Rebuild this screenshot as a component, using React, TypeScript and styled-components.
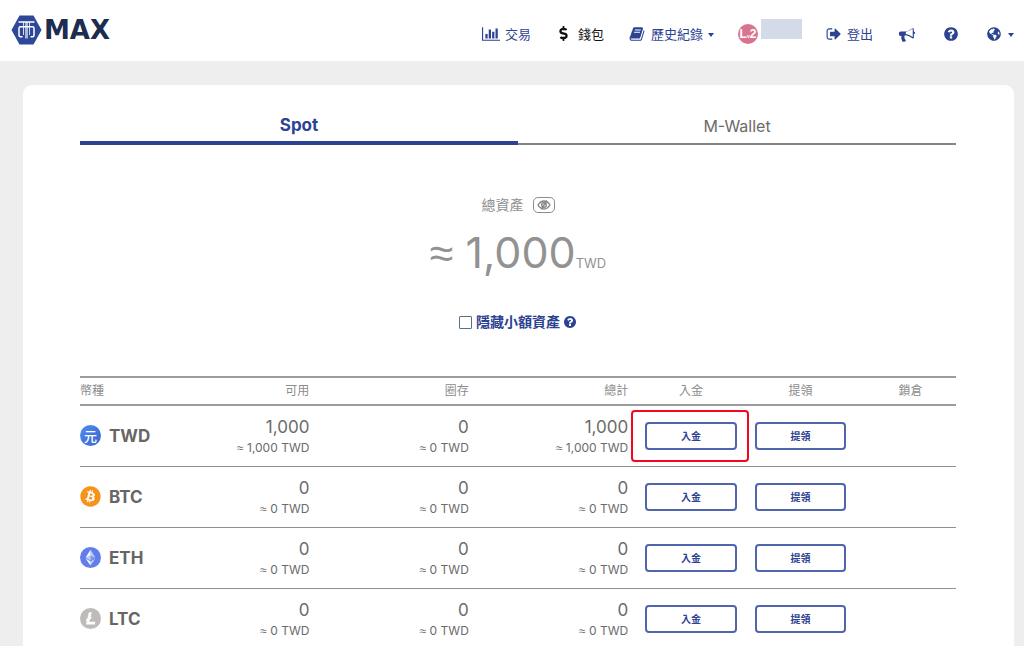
import React from "react";
import styled, { createGlobalStyle, css } from "styled-components";
import { FaBitcoin, FaDollarSign, FaGlobeAmericas } from "react-icons/fa";

const blue = "#2c4292";

const GlobalStyle = createGlobalStyle`
  *, *::before, *::after { box-sizing: border-box; }
  body {
    margin: 0;
    background: #eee;
    color: #6b6b6b;
    font-family: Inter, "Noto Sans CJK TC", sans-serif;
    font-size: 13px;
  }
  button, input { font: inherit; }
`;

const Header = styled.header`
  display: flex;
  justify-content: space-between;
  height: 61px;
  padding: 0 10px 0 11px;
  background: #fff;
`;

const Brand = styled.a`
  display: flex;
  align-items: center;
  gap: 2px;
  padding-bottom: 2px;
  color: #1c2d50;
  font-family: "DejaVu Sans", sans-serif;
  font-size: 26px;
  font-weight: 700;
  line-height: 30px;
  text-decoration: none;
`;

const Nav = styled.nav`
  display: flex;
  align-items: center;
  gap: 24px;
  padding-top: 6px;
`;

const NavLink = styled.a<{ $active?: boolean }>`
  display: flex;
  align-items: center;
  gap: 5px;
  color: ${(p) => (p.$active ? "#111" : blue)};
  line-height: 20px;
  text-decoration: none;
  white-space: nowrap;
`;

const IconBox = styled.span<{ $width?: number }>`
  display: flex;
  align-items: center;
  justify-content: center;
  width: ${(p) => p.$width ?? 18}px;
`;

const Caret = styled.span`
  border: 3px solid transparent;
  border-top: 4px solid currentColor;
  border-bottom: 0;
  margin-top: 3px;
`;

const User = styled.div`
  display: flex;
  align-items: center;
  gap: 3px;
`;

const Level = styled.span`
  width: 20px;
  height: 20px;
  border-radius: 50%;
  background: #d9748f;
  color: #fff;
  font-family: "Liberation Sans", sans-serif;
  font-size: 12px;
  font-weight: 700;
  line-height: 20px;
  text-align: center;
  white-space: nowrap;
  small { font-size: 5px; line-height: 1; }
`;

const UserName = styled.span`
  width: 41px;
  height: 20px;
  margin-bottom: 10px;
  background: #d5dae9;
`;

const Card = styled.main`
  margin: 24px 10px 0 23px;
  padding: 0 58px 0 57px;
  border-radius: 9px 9px 0 0;
  background: #fff;
`;

const Tabs = styled.div`
  display: flex;
  height: 60px;
`;

const Tab = styled.button<{ $active?: boolean }>`
  flex: 1;
  padding: 24px 0 0;
  border: 0;
  background: none;
  color: #6b6b6b;
  font-size: 16px;
  line-height: 20px;
  border-bottom: 2px solid #858585;
  ${(p) =>
    p.$active &&
    css`
      color: ${blue};
      font-size: 17px;
      font-weight: 700;
      border-bottom: 4px solid ${blue};
    `}
`;

const Summary = styled.section`
  display: flex;
  flex-direction: column;
  align-items: center;
  padding: 48px 0 42px;
  color: #929292;
`;

const SummaryLabel = styled.div`
  display: flex;
  align-items: center;
  gap: 9px;
  font-size: 14px;
  line-height: 24px;
`;

const EyeButton = styled.button`
  display: flex;
  align-items: center;
  justify-content: center;
  width: 22px;
  height: 16px;
  padding: 0;
  border: 1px solid #8d8d8d;
  border-radius: 5px;
  background: none;
  color: #858585;
`;

const ApproxSign = styled.span`
  font-family: "Liberation Sans", sans-serif;
  line-height: 1;
`;

const Total = styled.div`
  height: 70px;
  font-size: 43px;
  line-height: 70px;
  white-space: nowrap;
  small { font-size: 13px; line-height: 1; }
`;

const HideSmall = styled.div`
  display: flex;
  align-items: center;
  gap: 3px;
  margin-top: 23px;
  color: ${blue};
  font-size: 14px;
  font-weight: 700;
  line-height: 24px;
  label { display: flex; align-items: center; gap: 4px; }
  input {
    appearance: none;
    width: 13px;
    height: 13px;
    margin: 0;
    border: 1px solid #596f86;
    border-radius: 1px;
    background: #fff;
  }
`;

const Table = styled.table`
  width: 100%;
  border-collapse: collapse;
  table-layout: fixed;
`;

const HeadCell = styled.th<{ $align?: string; $width?: string }>`
  width: ${(p) => p.$width};
  height: 28px;
  padding: ${(p) => (p.$align === "left" ? "0" : "0 8px")};
  border-top: 2px solid #9c9c9c;
  border-bottom: 2px solid #9c9c9c;
  color: #8c8c8c;
  font-size: 12px;
  font-weight: 400;
  line-height: 20px;
  text-align: ${(p) => p.$align ?? "center"};
  white-space: nowrap;
  &:last-child { padding-left: 18px; }
`;

const Row = styled.tr`
  height: 61px;
  border-bottom: 1px solid #8f8f8f;
`;

const CoinCell = styled.th`
  padding: 0;
  text-align: left;
`;

const Coin = styled.div`
  display: flex;
  align-items: center;
  gap: 8px;
  color: #666;
  font-size: 17px;
  font-weight: 700;
  line-height: 22px;
`;

const CoinIcon = styled.span<{ $bg: string }>`
  display: flex;
  align-items: center;
  justify-content: center;
  flex: none;
  width: 21px;
  height: 21px;
  border-radius: 50%;
  background: ${(p) => p.$bg};
  color: #fff;
  font-size: 13px;
  font-weight: 500;
  line-height: 18px;
`;

const AmountCell = styled.td`
  padding: 3px 8px 0 0;
  text-align: right;
  white-space: nowrap;
`;

const Amount = styled.div`
  font-size: 17px;
  line-height: 22px;
`;

const Approx = styled.div`
  font-size: 12px;
  line-height: 20px;
`;

const ActionCell = styled.td`
  padding: 0 9px;
`;

const ActionWrap = styled.div<{ $marked?: boolean }>`
  position: relative;
  ${(p) =>
    p.$marked &&
    css`
      &::after {
        content: "";
        position: absolute;
        inset: -12px -12px -12px -14px;
        border: 2px solid #f5061f;
        border-radius: 4px;
        pointer-events: none;
      }
    `}
`;

const ActionButton = styled.button`
  display: block;
  width: 100%;
  height: 28px;
  padding: 0;
  border: 2px solid #4f66ae;
  border-radius: 4px;
  background: #fff;
  color: ${blue};
  font-size: 10px;
  font-weight: 700;
  line-height: 20px;
`;

const paths = {
  chart:
    "M640 896v512H384V896h256zm384-512v1024H768V384h256zm1024 1152v128H0V128h128v1408h1920zm-640-896v768h-256V640h256zm384-384v1152h-256V256h256z",
  book: "M1703 478q40 57 18 129l-275 906q-19 64-76.500 107.500T1247 1664H324q-77 0-148.500-53.500T76 1479q-24-67-2-127 0-4 3-27t4-37q1-8-3-21.500t-3-19.500q2-11 8-21t16.500-23.500T116 1179q23-38 45-91.500t30-91.500q3-10 .5-30t-.5-28q3-11 17-28t17-23q21-36 42-92t25-90q1-9-2.500-32t.5-28q4-13 22-30.500t22-22.500q19-26 42.500-84.500T404 411q1-8-3-25.500t-2-26.500q2-8 9-18t18-23 17-21q8-12 16.500-30.500t15-35 16-36 19.500-32T533.500 140t36-11.500T617 134l-1 3q38-9 51-9h761q74 0 114 56t18 130l-274 906q-36 119-71.500 153.500T1086 1408H217q-27 0-38 15-11 16-1 43 24 70 144 70h923q29 0 56-15.500t35-41.500l300-987q7-22 5-57 38 15 59 43zm-1064 2q-4 13 2 22.500t20 9.500h608q13 0 25.500-9.500T1311 480l21-64q4-13-2-22.500t-20-9.500H702q-13 0-25.500 9.500T660 416zm-83 256q-4 13 2 22.500t20 9.500h608q13 0 25.500-9.500T1228 736l21-64q4-13-2-22.500t-20-9.500H619q-13 0-25.500 9.500T577 672z",
  signOut:
    "M704 1440q0 4 1 20t.5 26.500-3 23.500-10 19.500-20.500 6.500H352q-119 0-203.500-84.500T64 1248V544q0-119 84.500-203.500T352 256h320q13 0 22.500 9.500t9.500 22.500q0 4 1 20t.5 26.500-3 23.500-10 19.500-20.500 6.500H352q-66 0-113 47t-47 113v704q0 66 47 113t113 47h312l11.500 1 11.500 3 8 5.500 7 9 2 13.500zm928-544q0 26-19 45l-544 544q-19 19-45 19t-45-19-19-45v-288H512q-26 0-45-19t-19-45V704q0-26 19-45t45-19h448V352q0-26 19-45t45-19 45 19l544 544q19 19 19 45z",
  bullhorn:
    "M1664 640q53 0 90.500 37.500t37.500 90.500-37.500 90.500-90.500 37.500v384q0 52-38 90t-90 38q-417-347-812-380-58 19-91 66t-31 100.500 40 92.500q-20 33-23 65.500t6 58 33.500 55 48 50T768 1666q-29 58-111.500 83t-168.500 11.500T356 1705q-7-23-29.500-87.500t-32-94.500-23-89-15-101 3.500-98.500 22-110.500h-122q-66 0-113-47t-47-113v-192q0-66 47-113t113-47h480q435 0 896-384 52 0 90 38t38 90v384zm-128 604v-954q-394 302-768 343v270q377 42 768 341z",
  question:
    "M1024 1376v-192q0-14-9-23t-23-9H800q-14 0-23 9t-9 23v192q0 14 9 23t23 9h192q14 0 23-9t9-23zm256-672q0-88-55.500-163T1086 425t-170-41q-243 0-371 213-15 24 8 42l132 100q7 6 19 6 16 0 25-12 53-68 86-92 34-24 86-24 48 0 85.500 26t37.500 59q0 38-20 61t-68 45q-63 28-115.500 86.500T768 1020v36q0 14 9 23t23 9h192q14 0 23-9t9-23q0-19 21.500-49.500T1100 957q32-18 49-28.500t46-35 44.500-48 28-60.500 12.500-81zm384 192q0 209-103 385.500T1281.500 1561 896 1664t-385.500-103T231 1281.500 128 896t103-385.500T510.500 231 896 128t385.500 103T1561 510.500 1664 896z",
};

function Glyph({ name, size }: { name: keyof typeof paths; size: number }) {
  const w = name === "chart" ? 2048 : 1792;
  return (
    <svg width={Math.round((size * w) / 1792)} height={size} viewBox={`0 0 ${w} 1792`} fill="currentColor" aria-hidden="true">
      <path d={paths[name]} />
    </svg>
  );
}

function LogoMark() {
  return (
    <svg width="31" height="30" viewBox="0 0 31 30" aria-hidden="true">
      <path d="M8.500.500h14L30.500 15l-8 14.500h-14L.500 15z" fill="#2f4798" />
      <path d="M14 7h3v16.500h-3z" fill="#aab5da" />
      <g fill="none" stroke="#fff" strokeWidth="1.500">
        <path d="M7.500 7h16" />
        <path d="M11.500 21.800H9.500q-1.500 0-1.500-1.500v-7q0-1.500 1.500-1.500h12q1.500 0 1.500 1.500v7q0 1.500-1.500 1.500H19.500" />
        <path d="M12.500 7v13M18.500 7v13" strokeWidth="1" strokeOpacity=".8" />
      </g>
    </svg>
  );
}

function EyeIcon() {
  return (
    <svg width="14" height="12" viewBox="0 0 14 12" fill="none" stroke="currentColor" strokeWidth="1.400" aria-hidden="true">
      <path d="M1 6q2.500-4 6-4t6 4q-2.500 4-6 4T1 6z" />
      <circle cx="7" cy="6" r="2.300" />
      <path d="M4.300 10.300l5.400-8.600" />
    </svg>
  );
}

function EthIcon() {
  return (
    <svg width="21" height="21" viewBox="0 0 32 32" fill="#fff" aria-hidden="true">
      <path d="M16 4v8.900l7.500 3.300z" fillOpacity=".6" />
      <path d="M16 4L8.500 16.200l7.500-3.300z" />
      <path d="M16 22v6l7.500-10.400z" fillOpacity=".6" />
      <path d="M16 28v-6l-7.500-4.400z" />
      <path d="M16 20.600l7.500-4.400-7.500-3.300z" fillOpacity=".2" />
      <path d="M8.500 16.200l7.500 4.400v-7.700z" fillOpacity=".6" />
    </svg>
  );
}

function LtcIcon() {
  return (
    <svg width="21" height="21" viewBox="0 0 32 32" fill="#fff" aria-hidden="true">
      <path d="M10.400 19.200l-1.700.7.800-3.200 1.700-.7 2.500-9.500h4.300l-1.900 7.200 1.700-.7-.8 3.200-1.700.7-1.100 4.200h9.200l-1 4H9.200z" />
    </svg>
  );
}

const coins = [
  { code: "TWD", amount: "1,000", bg: "linear-gradient(135deg, #4f8df0, #3965cf)", icon: "元" },
  { code: "BTC", amount: "0", bg: "#fff", icon: <FaBitcoin size={21} color="#f7931a" /> },
  { code: "ETH", amount: "0", bg: "#627eea", icon: <EthIcon /> },
  { code: "LTC", amount: "0", bg: "#bfbbbb", icon: <LtcIcon /> },
];

function Balance({ value }: { value: string }) {
  return (
    <AmountCell>
      <Amount>{value}</Amount>
      <Approx>
        <ApproxSign>≈</ApproxSign> {value} TWD
      </Approx>
    </AmountCell>
  );
}

export default function App() {
  return (
    <>
      <GlobalStyle />
      <Header>
        <Brand href="#">
          <LogoMark />
          MAX
        </Brand>
        <Nav>
          <NavLink href="#">
            <IconBox><Glyph name="chart" size={16} /></IconBox>
            交易
          </NavLink>
          <NavLink href="#" $active>
            <IconBox><FaDollarSign size={15} /></IconBox>
            錢包
          </NavLink>
          <NavLink href="#">
            <IconBox><Glyph name="book" size={16} /></IconBox>
            歷史紀錄
            <Caret />
          </NavLink>
          <User>
            <Level>L<small>v</small>2</Level>
            <UserName />
          </User>
          <NavLink href="#">
            <IconBox $width={16}><Glyph name="signOut" size={16} /></IconBox>
            登出
          </NavLink>
          <NavLink href="#" aria-label="公告">
            <IconBox $width={20}><Glyph name="bullhorn" size={16} /></IconBox>
          </NavLink>
          <NavLink href="#" aria-label="說明">
            <IconBox $width={20}><Glyph name="question" size={16} /></IconBox>
          </NavLink>
          <NavLink href="#" aria-label="語言">
            <IconBox><FaGlobeAmericas size={14} /></IconBox>
            <Caret />
          </NavLink>
        </Nav>
      </Header>
      <Card>
        <Tabs role="tablist">
          <Tab role="tab" aria-selected="true" $active>Spot</Tab>
          <Tab role="tab" aria-selected="false">M-Wallet</Tab>
        </Tabs>
        <Summary>
          <SummaryLabel>
            總資產
            <EyeButton aria-label="顯示或隱藏資產"><EyeIcon /></EyeButton>
          </SummaryLabel>
          <Total>
            <ApproxSign>≈</ApproxSign> 1,000<small>TWD</small>
          </Total>
          <HideSmall>
            <label>
              <input type="checkbox" />
              隱藏小額資產
            </label>
            <Glyph name="question" size={14} />
          </HideSmall>
        </Summary>
        <Table>
          <thead>
            <tr>
              <HeadCell $width="9%" $align="left">幣種</HeadCell>
              <HeadCell $width="18.100%" $align="right">可用</HeadCell>
              <HeadCell $width="18.200%" $align="right">圈存</HeadCell>
              <HeadCell $width="18.200%" $align="right">總計</HeadCell>
              <HeadCell $width="12.500%">入金</HeadCell>
              <HeadCell $width="12.500%">提領</HeadCell>
              <HeadCell>鎖倉</HeadCell>
            </tr>
          </thead>
          <tbody>
            {coins.map((c, i) => (
              <Row key={c.code}>
                <CoinCell scope="row">
                  <Coin>
                    <CoinIcon $bg={c.bg}>{c.icon}</CoinIcon>
                    {c.code}
                  </Coin>
                </CoinCell>
                <Balance value={c.amount} />
                <Balance value="0" />
                <Balance value={c.amount} />
                <ActionCell>
                  <ActionWrap $marked={i === 0}>
                    <ActionButton>入金</ActionButton>
                  </ActionWrap>
                </ActionCell>
                <ActionCell>
                  <ActionWrap>
                    <ActionButton>提領</ActionButton>
                  </ActionWrap>
                </ActionCell>
                <td />
              </Row>
            ))}
          </tbody>
        </Table>
      </Card>
    </>
  );
}
